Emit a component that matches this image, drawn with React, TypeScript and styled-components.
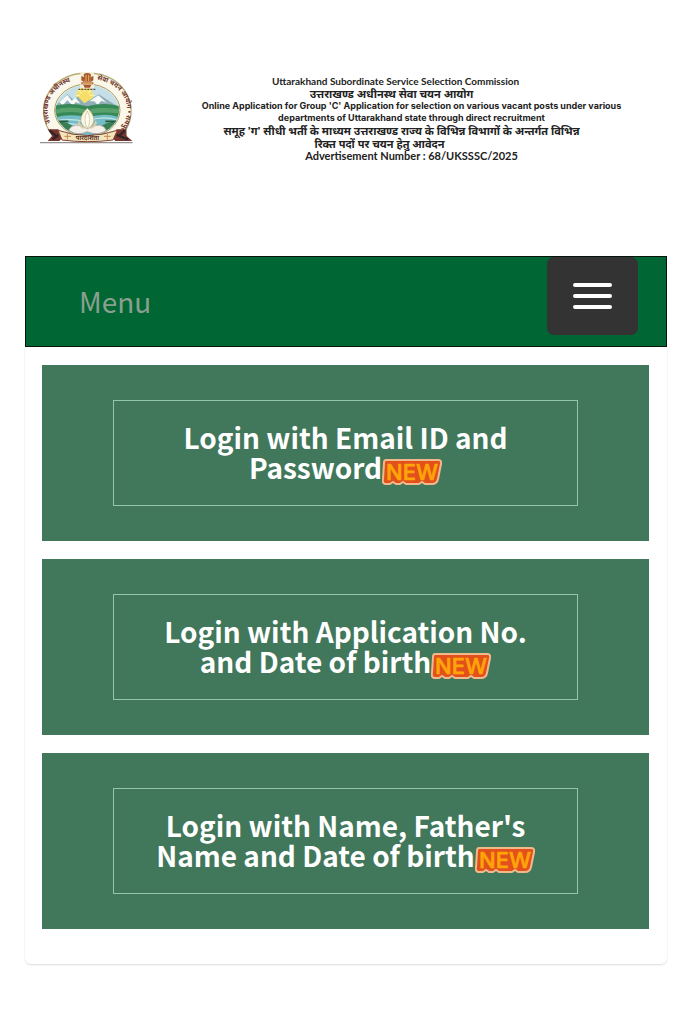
import React from "react";
import styled, { createGlobalStyle } from "styled-components";

const GlobalStyle = createGlobalStyle`
  *, *::before, *::after { box-sizing: border-box; }
  body {
    margin: 0;
    background: #fff;
    font-family: "Noto Sans CJK SC", "Noto Sans", sans-serif;
  }
`;

const Page = styled.div`
  padding: 70px 24px 60px 25px;
`;

const Banner = styled.header`
  display: flex;
  align-items: flex-start;
  height: 186px;
  padding-left: 14px;
`;

const EmblemArt = styled.svg`
  flex: none;
  width: 95px;
  height: 76px;
`;

const BannerText = styled.div`
  flex: 1;
  display: flex;
  flex-direction: column;
  padding: 5px 0 0 22px;
  color: #222;
  font-weight: 700;
  text-align: center;
  white-space: nowrap;
`;

const BannerLine = styled.div<{ $size: number; $face?: string; $trail?: number }>`
  font-family: ${(p) => (p.$face ? `"${p.$face}", ` : "")}"Noto Sans", sans-serif;
  font-size: ${(p) => p.$size}px;
  line-height: ${(p) => (p.$face ? 12 : 13)}px;
  padding-right: ${(p) => p.$trail ?? 0}px;
`;

const NavBar = styled.nav`
  display: flex;
  justify-content: space-between;
  align-items: flex-start;
  height: 91px;
  padding: 0 28px 0 53px;
  background: #006633;
  border: 1px solid #08150d;
`;

const MenuLink = styled.a`
  color: #8aa08f;
  font-size: 28px;
  line-height: 40px;
  padding-top: 24px;
  text-decoration: none;
`;

const ToggleButton = styled.button`
  display: flex;
  flex-direction: column;
  align-items: center;
  justify-content: center;
  gap: 7px;
  width: 91px;
  height: 78px;
  padding: 0;
  border: 0;
  border-radius: 7px;
  background: #333;
`;

const ToggleBar = styled.span`
  width: 39px;
  height: 4px;
  border-radius: 2px;
  background: #fff;
`;

const Card = styled.main`
  display: flex;
  flex-direction: column;
  gap: 18px;
  padding: 18px 18px 35px 17px;
  border-radius: 0 0 6px 6px;
  box-shadow: 0 1px 2px rgba(0, 0, 0, 0.14);
`;

const Tile = styled.section`
  padding: 35px 71px;
  background: #41775b;
`;

const LoginLink = styled.a`
  display: block;
  padding: 21px 20px 23px;
  border: 1px solid #93c6aa;
  color: #fff;
  font-size: 28px;
  font-weight: 700;
  line-height: 30px;
  text-align: center;
  text-decoration: none;
`;

const TileLine = styled.span`
  display: block;
  height: 30px;
  white-space: nowrap;
`;

const BadgeArt = styled.svg`
  width: 60px;
  height: 26px;
  vertical-align: -6px;
`;

function NewBadge() {
  return (
    <BadgeArt viewBox="0 0 60 26" role="img" aria-label="New">
      <path
        d="M4 1H56Q60 1 59 5L56 20Q55 25 50 25H43L40 23L37 25H24L21 23L18 25H14L11 23L8 25H3Q0 24 1 20L2 4Q2 1 4 1Z"
        fill="#e2501c"
        stroke="#efb98c"
        strokeWidth="2"
      />
      <text
        x="30"
        y="21"
        textAnchor="middle"
        fontFamily="Inter, sans-serif"
        fontSize="22"
        fontWeight="500"
        fill="#ffa508"
        stroke="#ffa508"
        strokeWidth="0.6"
        strokeLinejoin="round"
      >
        NEW
      </text>
    </BadgeArt>
  );
}

function Emblem() {
  return (
    <EmblemArt viewBox="27 30 285 228" role="img" aria-label="Commission emblem">
      <defs>
        <path id="emblem-arc-left" d="M74 211C30 150 55 75 146 58" />
        <path id="emblem-arc-right" d="M198 58C289 75 314 150 270 211" />
        <clipPath id="emblem-scene">
          <ellipse cx="172" cy="151" rx="95" ry="76" />
        </clipPath>
      </defs>
      <path d="M30 248H308" stroke="#96918d" strokeWidth="4" />
      <path
        d="M65 222C10 155 50 39 172 39C294 39 334 155 279 222Z"
        fill="#fbf7ea"
        stroke="#b8ad76"
        strokeWidth="4"
      />
      <ellipse cx="172" cy="151" rx="98" ry="79" fill="#e9eee2" stroke="#a99c62" strokeWidth="3" />
      <g clipPath="url(#emblem-scene)">
        <rect x="70" y="70" width="210" height="70" fill="#c5dfe9" />
        <circle cx="164" cy="105" r="25" fill="#f6df69" />
        <path d="M164 80V95M143 86L155 100M186 86L174 100M137 106H150M178 106H193" stroke="#fff1a0" strokeWidth="4" />
        <path d="M70 144L112 102L130 119L144 110L163 130L185 116L206 103L279 149V160H70Z" fill="#8faeb7" />
        <path d="M88 127L112 104L125 122L137 113L151 131L137 126L129 137L112 121L98 136ZM178 124L205 106L230 128L214 122L203 135L193 124Z" fill="#f5faf8" />
        <path d="M70 139Q115 125 172 139Q227 124 280 142V185H70Z" fill="#378857" />
        <path d="M70 151Q116 135 172 150Q221 136 280 151V162Q219 153 172 162Q116 150 70 163Z" fill="#58a16c" />
        <path d="M71 174Q122 158 172 173Q223 156 274 173V236H71Z" fill="#74bcc6" />
        <path d="M75 183Q122 173 169 186M177 181Q220 166 267 181M86 195Q126 187 156 197" fill="none" stroke="#c6e7e8" strokeWidth="4" />
        <path d="M70 187Q108 178 136 205L123 230H70ZM274 186Q237 180 205 204L218 230H274Z" fill="#397d52" />
        <path d="M78 184H115M226 184H258" stroke="#285b3b" strokeWidth="5" />
      </g>
      <path d="M116 211Q129 183 172 205Q216 183 229 211Q205 229 172 215Q142 229 116 211Z" fill="#f5f0e8" stroke="#9c9590" strokeWidth="2" />
      <path d="M172 207C142 190 151 164 172 145C193 164 202 190 172 207Z" fill="#faf5dd" stroke="#b7a88b" strokeWidth="2" />
      <path d="M172 206Q158 179 172 153Q186 179 172 206Z" fill="#fffdf3" stroke="#c7bd98" strokeWidth="2" />
      <path d="M155 205Q137 192 147 181Q151 196 165 207M188 205Q207 192 197 181Q192 196 179 207" fill="#d7cda9" />
      <g fontFamily="Noto Sans, sans-serif" fontSize="20" fontWeight="700" fill="#71342d">
        <text>
          <textPath href="#emblem-arc-left" startOffset="50%" textAnchor="middle">
            उत्तराखण्ड अधीनस्थ
          </textPath>
        </text>
        <text>
          <textPath href="#emblem-arc-right" startOffset="50%" textAnchor="middle">
            सेवा चयन आयोग • रायपुर
          </textPath>
        </text>
      </g>
      <g fill="#a85a2e">
        <rect x="151" y="36" width="41" height="49" fill="#f6edda" />
        <path d="M161 43Q171 35 183 43L180 65H164ZM154 48L163 52V67L154 61ZM190 48L181 52V67L190 61Z" />
        <rect x="154" y="67" width="36" height="6" />
        <path d="M160 74H184L180 83H164Z" />
        <path d="M168 45V64M176 45V64M157 70H187" stroke="#e9b45c" strokeWidth="3" />
      </g>
      <path d="M145 88H199" stroke="#574b3b" strokeWidth="4" strokeDasharray="6 3" />
      <path d="M53 208L85 208L101 230L88 243H53L66 228ZM289 208H260L244 230L256 243H307L290 228Z" fill="#77352f" />
      <path d="M59 211L77 227M68 238L85 225M285 211L268 227M294 238L260 225" stroke="#302427" strokeWidth="7" />
      <path d="M84 211Q172 242 262 211L249 240Q172 250 96 240Z" fill="#f5e5bd" stroke="#824331" strokeWidth="3" />
      <path d="M103 229H123M112 221V239M222 229H242M232 221V239" stroke="#c38a4b" strokeWidth="3" />
      <text x="172" y="240" textAnchor="middle" fontFamily="Noto Sans, sans-serif" fontSize="18" fontWeight="700" fill="#5c3024">
        पारदर्शिता
      </text>
    </EmblemArt>
  );
}

const logins = [
  ["Login with Email ID and", "Password"],
  ["Login with Application No.", "and Date of birth"],
  ["Login with Name, Father's", "Name and Date of birth"],
];

export default function App() {
  return (
    <>
      <GlobalStyle />
      <Page>
        <Banner>
          <Emblem />
          <BannerText>
            <BannerLine $size={10} $face="Lato" $trail={32}>
              Uttarakhand Subordinate Service Selection Commission
            </BannerLine>
            <BannerLine $size={11} $trail={40}>उत्तराखण्ड अधीनस्थ सेवा चयन आयोग</BannerLine>
            <BannerLine $size={9} $face="Inter">
              Online Application for Group 'C' Application for selection on various vacant posts under various
            </BannerLine>
            <BannerLine $size={9} $face="Inter">
              departments of Uttarakhand state through direct recruitment
            </BannerLine>
            <BannerLine $size={11} $trail={20}>
              समूह 'ग' सीधी भर्ती के माध्यम उत्तराखण्ड राज्य के विभिन्न विभागों के अन्तर्गत विभिन्न
            </BannerLine>
            <BannerLine $size={11} $trail={64}>रिक्त पदों पर चयन हेतु आवेदन</BannerLine>
            <BannerLine $size={11} $face="Lato">Advertisement Number : 68/UKSSSC/2025</BannerLine>
          </BannerText>
        </Banner>
        <NavBar>
          <MenuLink href="#menu">Menu</MenuLink>
          <ToggleButton type="button" aria-label="Toggle navigation">
            <ToggleBar />
            <ToggleBar />
            <ToggleBar />
          </ToggleButton>
        </NavBar>
        <Card>
          {logins.map(([first, second]) => (
            <Tile key={first}>
              <LoginLink href="#login">
                <TileLine>{first}</TileLine>
                <TileLine>
                  {second}
                  <NewBadge />
                </TileLine>
              </LoginLink>
            </Tile>
          ))}
        </Card>
      </Page>
    </>
  );
}
